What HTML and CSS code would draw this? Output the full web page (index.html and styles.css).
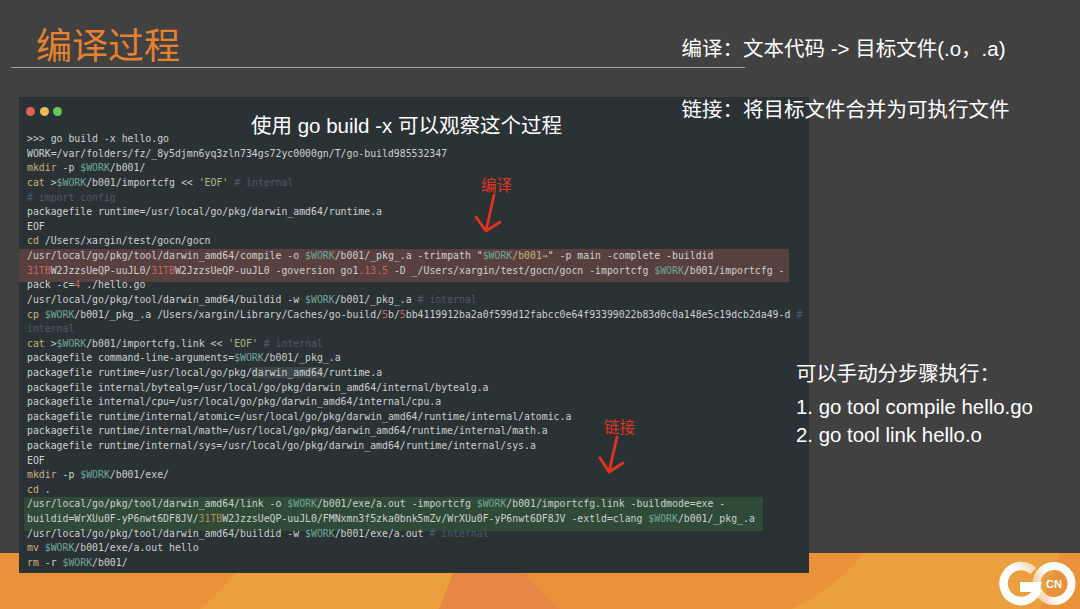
FILE: index.html
```html
<!DOCTYPE html>
<html lang="zh">
<head>
<meta charset="utf-8">
<title>编译过程</title>
<link rel="stylesheet" href="styles.css">
</head>
<body>
<main class="slide">
  <svg class="footer-art" viewBox="0 0 1080 56" aria-hidden="true">
    <rect width="1080" height="56" fill="#ec9f3e"/>
    <path d="M0 0H251Q230 30 200 56H0Z" fill="#ea923a"/>
    <path d="M459 0H510Q535 35 561 56H439Q450 30 459 0Z" fill="#e68644"/>
    <path d="M510 0H864Q835 35 792 56H561Q535 35 510 0Z" fill="#ea923a"/>
    <path d="M1060 0H1080V56H1040Q1050 30 1060 0Z" fill="#ea923a"/>
  </svg>

  <header class="title-block">
    <h1 class="title">编译过程</h1>
  </header>

  <section class="terminal">
    <div class="dots"><i class="dot red"></i><i class="dot yellow"></i><i class="dot green"></i></div>
    <div class="band band-red"></div>
    <div class="band band-green"></div>
    <div class="code">
      <div class="l">&gt;&gt;&gt; go build -x hello.go</div>
      <div class="l">WORK=/var/folders/fz/_8y5djmn6yq3zln734gs72yc0000gn/T/go-build985532347</div>
      <div class="l"><b>mkdir</b> -p <u>$WORK</u>/b001/</div>
      <div class="l"><b>cat</b> &gt;<u>$WORK</u>/b001/importcfg &lt;&lt; <s>'EOF'</s> <em># internal</em></div>
      <div class="l"><em># import config</em></div>
      <div class="l">packagefile runtime=/usr/local/go/pkg/darwin_amd64/runtime.a</div>
      <div class="l">EOF</div>
      <div class="l"><b>cd</b> /Users/xargin/test/gocn/gocn</div>
      <div class="l">/usr/local/go/pkg/tool/darwin_amd64/compile -o <u>$WORK</u>/b001/_pkg_.a -trimpath "<u>$WORK</u><b>/b001⇒</b>" -p main -complete -buildid</div>
      <div class="l"><q>31TB</q>W2JzzsUeQP-uuJL0/<q>31TB</q>W2JzzsUeQP-uuJL0 -goversion go1<q>.13.5</q> -D _/Users/xargin/test/gocn/gocn -importcfg <u>$WORK</u>/b001/importcfg -</div>
      <div class="l">pack -c=<q>4</q> ./hello.go</div>
      <div class="l">/usr/local/go/pkg/tool/darwin_amd64/buildid -w <u>$WORK</u>/b001/_pkg_.a <em># internal</em></div>
      <div class="l"><b>cp</b> <u>$WORK</u>/b001/_pkg_.a /Users/xargin/Library/Caches/go-build/<q>5</q>b/<q>5</q>bb4119912ba2a0f599d12fabcc0e64f93399022b83d0c0a148e5c19dcb2da49-d <em>#</em></div>
      <div class="l"><em>internal</em></div>
      <div class="l"><b>cat</b> &gt;<u>$WORK</u>/b001/importcfg.link &lt;&lt; <s>'EOF'</s> <em># internal</em></div>
      <div class="l">packagefile command-line-arguments=<u>$WORK</u>/b001/_pkg_.a</div>
      <div class="l">packagefile runtime=/usr/local/go/pkg/<mark>darwin_amd64</mark>/runtime.a</div>
      <div class="l">packagefile internal/bytealg=/usr/local/go/pkg/darwin_amd64/internal/bytealg.a</div>
      <div class="l">packagefile internal/cpu=/usr/local/go/pkg/darwin_amd64/internal/cpu.a</div>
      <div class="l">packagefile runtime/internal/atomic=/usr/local/go/pkg/darwin_amd64/runtime/internal/atomic.a</div>
      <div class="l">packagefile runtime/internal/math=/usr/local/go/pkg/darwin_amd64/runtime/internal/math.a</div>
      <div class="l">packagefile runtime/internal/sys=/usr/local/go/pkg/darwin_amd64/runtime/internal/sys.a</div>
      <div class="l">EOF</div>
      <div class="l"><b>mkdir</b> -p <u>$WORK</u>/b001/exe/</div>
      <div class="l"><b>cd</b> .</div>
      <div class="l">/usr/local/go/pkg/tool/darwin_amd64/link -o <u>$WORK</u>/b001/exe/a.out -importcfg <u>$WORK</u>/b001/importcfg.link -buildmode=exe -</div>
      <div class="l">buildid=WrXUu0F-yP6nwt6DF8JV/<q class="warm">31TB</q>W2JzzsUeQP-uuJL0/FMNxmn3f5zka0bnk5mZv/WrXUu0F-yP6nwt6DF8JV -extld=clang <u>$WORK</u>/b001/_pkg_.a</div>
      <div class="l">/usr/local/go/pkg/tool/darwin_amd64/buildid -w <u>$WORK</u>/b001/exe/a.out <em># internal</em></div>
      <div class="l"><b>mv</b> <u>$WORK</u>/b001/exe/a.out hello</div>
      <div class="l"><b>rm</b> -r <u>$WORK</u>/b001/</div>
    </div>
  </section>

  <div class="notes-top">
    <p>编译：文本代码 -&gt; 目标文件(.o，.a)</p>
    <p>链接：将目标文件合并为可执行文件</p>
  </div>

  <p class="caption">使用 go build -x 可以观察这个过程</p>

  <p class="tag tag-compile">编译</p>
  <svg class="arrow arrow-compile" viewBox="0 0 28 42" aria-hidden="true"><path d="M20 2L12 38M2 24L12 38L26 29" /></svg>
  <p class="tag tag-link">链接</p>
  <svg class="arrow arrow-link" viewBox="0 0 28 42" aria-hidden="true"><path d="M20 2L12 37M3 23L12 37L26 28" /></svg>

  <div class="notes-side">
    <p class="side-head">可以手动分步骤执行：</p>
    <p>1. go tool compile hello.go</p>
    <p>2. go tool link hello.o</p>
  </div>

  <svg class="logo" viewBox="0 0 80 48" aria-hidden="true">
    <defs>
      <linearGradient id="fadeG" gradientUnits="userSpaceOnUse" x1="26" y1="18" x2="40" y2="6">
        <stop offset="0" stop-color="#fff"/><stop offset="1" stop-color="#fff" stop-opacity=".45"/>
      </linearGradient>
      <linearGradient id="fadeO" gradientUnits="userSpaceOnUse" x1="42" y1="42" x2="58" y2="36">
        <stop offset="0" stop-color="#fff" stop-opacity=".5"/><stop offset="1" stop-color="#fff"/>
      </linearGradient>
    </defs>
    <circle cx="56" cy="23.500" r="17.500" fill="none" stroke="url(#fadeO)" stroke-width="8"/>
    <path d="M35.400 11.100A17.500 17.500 0 1 0 40 28" fill="none" stroke="url(#fadeG)" stroke-width="8.500"/>
    <path d="M22 22H44L41 32H22Z" fill="#fff"/>
    <text x="56" y="27.500" class="logo-text">CN</text>
  </svg>
</main>
</body>
</html>
```
FILE: styles.css
```css
* { box-sizing: border-box; margin: 0; padding: 0; }
html, body { width: 1080px; height: 609px; overflow: hidden; background: #414141; }
.slide {
  position: relative;
  width: 1080px;
  height: 609px;
  background: #414141;
  font-family: "Liberation Sans", "Noto Sans CJK SC", sans-serif;
  color: #fff;
}
.footer-art { position: absolute; left: 0; top: 553px; width: 1080px; height: 56px; display: block; }

.title-block { position: absolute; left: 11px; top: 0; width: 734px; height: 68px; border-bottom: 1.500px solid #a5a5a5; padding-left: 25px; padding-top: 19px; }
.title { font: 400 36px/48px "Noto Sans CJK SC", sans-serif; color: #e5812f; }

.notes-top { position: absolute; left: 681.500px; top: 36px; font-size: 20.500px; line-height: 26px; z-index: 2; }
.notes-top p + p { margin-top: 35px; }

.terminal { position: absolute; left: 19px; top: 97px; width: 790px; height: 476px; background: #2b3236; }
.dots { position: absolute; left: 7px; top: 10px; display: flex; gap: 4.700px; }
.dot { display: block; width: 9px; height: 9px; border-radius: 50%; }
.red { background: #e0605a; }
.yellow { background: #ecbb52; }
.green { background: #6cc357; }

.code {
  position: absolute; left: 8px; top: 35.200px; z-index: 1;
  font-family: "DejaVu Sans Mono", monospace;
  font-size: 9.830px;
  line-height: 14.620px;
  color: #cdd1d0;
}
.l { height: 14.620px; white-space: pre; }
.code b { font-weight: 400; color: #c9b27a; }
.code u { text-decoration: none; color: #6fa79b; }
.code s { text-decoration: none; color: #a9ba80; }
.code em { font-style: normal; color: #4a5a66; }
.code q { quotes: none; color: #c8665b; }
.code q.warm { color: #b58a55; }
.code mark { background: #3a4649; color: inherit; }

.band { position: absolute; }
.band-red { left: 0; top: 152px; width: 770px; height: 33px; background: #58403f; }
.band-green { left: 5px; top: 400px; width: 739px; height: 34px; background: #304a38; }

.caption { position: absolute; left: 251px; top: 113px; font-size: 20.500px; line-height: 26px; z-index: 2; white-space: nowrap; }

.tag { position: absolute; font-size: 15.500px; line-height: 20px; color: #e4321f; z-index: 2; }
.tag-compile { left: 481px; top: 176px; }
.tag-link { left: 604px; top: 418px; }
.arrow { position: absolute; width: 28px; height: 42px; z-index: 2; fill: none; stroke: #e4321f; stroke-width: 2.800; stroke-linecap: round; stroke-linejoin: round; }
.arrow-compile { left: 474px; top: 193px; }
.arrow-link { left: 597px; top: 435px; }

.notes-side { position: absolute; left: 796px; top: 361px; font-size: 20.400px; line-height: 26px; }
.side-head { margin-bottom: 7px; }
.notes-side p + p + p { margin-top: 2px; }

.logo { position: absolute; left: 998px; top: 560px; width: 80px; height: 48px; }
.logo-text { font: 700 11px "Liberation Sans", sans-serif; fill: #fff; text-anchor: middle; }
```
